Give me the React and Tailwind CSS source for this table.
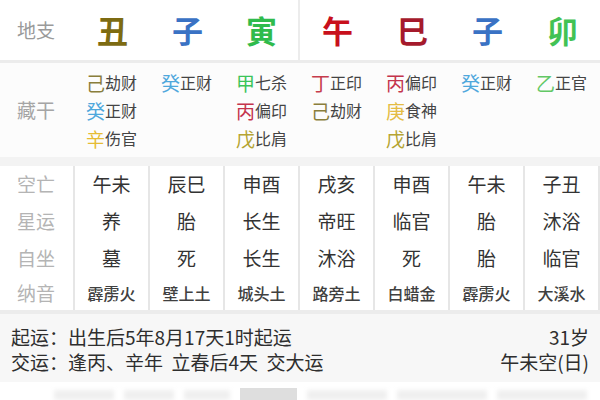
import React from "react";

const branches = [
  { c: "丑", color: "text-[#7d6b12]" },
  { c: "子", color: "text-[#3a72c4]" },
  { c: "寅", color: "text-[#2fbb4c]" },
  { c: "午", color: "text-[#c8101c]" },
  { c: "巳", color: "text-[#a51a2c]" },
  { c: "子", color: "text-[#3a72c4]" },
  { c: "卯", color: "text-[#42c254]" },
];

const S = {
  ji: "text-[#8a7e3c]",
  gui: "text-[#4fa8dc]",
  xin: "text-[#e6bc34]",
  jia: "text-[#3cc45a]",
  bing: "text-[#c4344c]",
  wu: "text-[#b4a432]",
  ding: "text-[#c63c4c]",
  geng: "text-[#e4bc44]",
  yi: "text-[#62c866]",
};

const hidden = [
  [["己", "劫财", S.ji], ["癸", "正财", S.gui], ["辛", "伤官", S.xin]],
  [["癸", "正财", S.gui]],
  [["甲", "七杀", S.jia], ["丙", "偏印", S.bing], ["戊", "比肩", S.wu]],
  [["丁", "正印", S.ding], ["己", "劫财", S.ji]],
  [["丙", "偏印", S.bing], ["庚", "食神", S.geng], ["戊", "比肩", S.wu]],
  [["癸", "正财", S.gui]],
  [["乙", "正官", S.yi]],
];

const rows = [
  { label: "空亡", h: "h-[37px]", small: false, vals: ["午未", "辰巳", "申酉", "戌亥", "申酉", "午未", "子丑"] },
  { label: "星运", h: "h-[37px]", small: false, vals: ["养", "胎", "长生", "帝旺", "临官", "胎", "沐浴"] },
  { label: "自坐", h: "h-[36px]", small: false, vals: ["墓", "死", "长生", "沐浴", "死", "胎", "临官"] },
  { label: "纳音", h: "h-[34px]", small: true, vals: ["霹雳火", "壁上土", "城头土", "路旁土", "白蜡金", "霹雳火", "大溪水"] },
];

export default function App() {
  return (
    <div className="w-[600px] h-[400px] bg-white overflow-hidden font-['Noto_Sans_CJK_SC',sans-serif] relative">
      {/* 地支 */}
      <div className="flex h-[60px] items-center">
        <div className="w-[75px] pl-[17px] text-[19px] text-[#9a9a9a]">地支</div>
        {branches.map((b, i) => (
          <div
            key={i}
            className={`w-[75px] h-full flex items-center justify-center text-[31px] font-bold ${b.color} ${i === 2 ? "border-r-2 border-[#ececec]" : ""}`}
          >
            {b.c}
          </div>
        ))}
      </div>
      <div className="h-[3px] bg-[#ececec]" />

      {/* 藏干 */}
      <div className="flex h-[94px] bg-[#fcfcfc]">
        <div className="w-[75px] pl-[17px] flex items-center text-[19px] text-[#a5a5a5]">藏干</div>
        {hidden.map((col, i) => (
          <div key={i} className="w-[75px] pt-[5px] pl-[11px] flex flex-col">
            {col.map(([s, t, c], j) => (
              <div key={j} className="h-[28px] flex items-center leading-none">
                <span className={`text-[19px] ${c}`}>{s}</span>
                <span className="text-[16px] text-[#444]">{t}</span>
              </div>
            ))}
          </div>
        ))}
      </div>
      <div className="h-[9px] bg-[#f3f3f3]" />

      {/* lower grid */}
      <div className="flex">
        <div className="w-[75px] flex flex-col border-r-2 border-[#e6e6e6]">
          {rows.map((r) => (
            <div key={r.label} className={`${r.h} pl-[17px] flex items-center text-[19px] text-[#b4b4b4]`}>
              {r.label}
            </div>
          ))}
        </div>
        {[0, 1, 2, 3, 4, 5, 6].map((ci) => (
          <div key={ci} className="w-[75px] flex flex-col border-r-2 border-[#e6e6e6]">
            {rows.map((r) => (
              <div
                key={r.label}
                className={`${r.h} flex items-center justify-center ${r.small ? "text-[16px] text-[#404040] font-medium" : "text-[19px] text-[#333]"}`}
              >
                {r.vals[ci]}
              </div>
            ))}
          </div>
        ))}
      </div>
      <div className="h-[4px] bg-[#ececec]" />

      {/* 起运 box */}
      <div className="h-[68px] bg-[#f7f7f7] px-[11px] pt-[10px] flex flex-col text-[19px] text-[#2e2e2e] leading-none">
        <div className="h-[25px] flex items-center justify-between">
          <span>起运：出生后5年8月17天1时起运</span>
          <span>31岁</span>
        </div>
        <div className="h-[25px] flex items-center justify-between">
          <span>交运：逢丙、辛年&nbsp; 立春后4天&nbsp; 交大运</span>
          <span>午未空(日)</span>
        </div>
      </div>

      {/* faint bottom strip */}
      <div className="flex items-end h-[18px] pl-[54px] gap-[10px] pt-[6px]">
        <div className="w-[60px] h-[10px] bg-[#efefef] blur-[2px]" />
        <div className="w-[50px] h-[10px] bg-[#efefef] blur-[2px]" />
        <div className="w-[46px] h-[10px] bg-[#efefef] blur-[2px]" />
        <div className="w-[57px] h-[12px] bg-[#dedede]" />
        <div className="w-[80px] h-[10px] bg-[#efefef] blur-[2px]" />
        <div className="w-[90px] h-[10px] bg-[#efefef] blur-[2px]" />
        <div className="w-[90px] h-[10px] bg-[#efefef] blur-[2px]" />
      </div>
    </div>
  );
}
